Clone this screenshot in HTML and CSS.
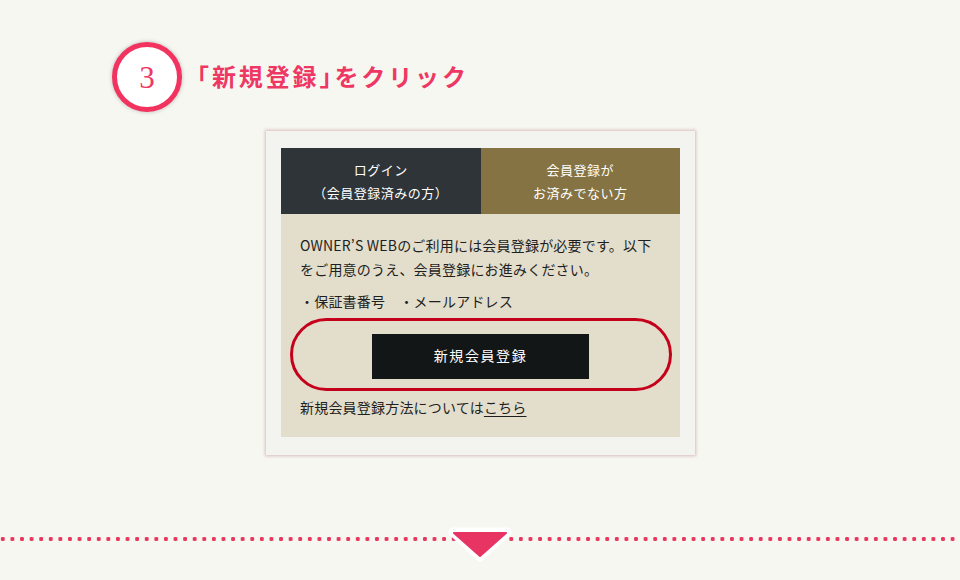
FILE: index.html
```html
<!DOCTYPE html>
<html lang="ja">
<head>
<meta charset="utf-8">
<link rel="stylesheet" href="styles.css">
</head>
<body>
<div class="page">
  <div class="step">
    <div class="num">3</div>
    <h2 class="step-title">「新規登録」をクリック</h2>
  </div>
  <div class="card">
    <div class="tabs">
      <div class="tab tab-login">ログイン<br>（会員登録済みの方）</div>
      <div class="tab tab-new">会員登録が<br>お済みでない方</div>
    </div>
    <div class="panel">
      <p class="lead">OWNER’S WEBのご利用には会員登録が必要です。以下<br>をご用意のうえ、会員登録にお進みください。</p>
      <p class="needs">・保証書番号　・メールアドレス</p>
      <div class="btn-row"><span class="btn">新規会員登録</span></div>
      <p class="howto">新規会員登録方法については<a href="#" class="link">こちら</a></p>
      <div class="oval"></div>
    </div>
  </div>
  <div class="divider">
    <svg class="arrow" width="70" height="40" viewBox="0 0 70 40">
      <polygon points="8,6 62,6 35,31" fill="#fff" stroke="#fff" stroke-width="9" stroke-linejoin="round"/>
      <polygon points="9,7 61,7 35,30" fill="#E83462" stroke="#E83462" stroke-width="2" stroke-linejoin="round"/>
    </svg>
  </div>
</div>
</body>
</html>
```
FILE: styles.css
```css
html, body {
  margin: 0;
  padding: 0;
}
body {
  background: #F7F7F2;
  font-family: "Noto Sans CJK JP", "Noto Sans", sans-serif;
  color: #2b2b2b;
  width: 960px;
  height: 580px;
  overflow: hidden;
}
.page {
  padding-top: 42px;
}
.step {
  display: flex;
  align-items: center;
  padding-left: 112px;
  gap: 14px;
}
.num {
  width: 60px;
  height: 60px;
  border: 5px solid #F2335F;
  border-radius: 50%;
  background: #fff;
  box-shadow: 0 0 4px rgba(0,0,0,0.25);
  display: flex;
  align-items: center;
  justify-content: center;
  font-family: "Liberation Serif", "DejaVu Serif", serif;
  font-size: 31px;
  color: #EE3763;
  line-height: 1;
}
.step-title {
  margin: 0 0 2px 1px;
  font-size: 24px;
  font-weight: 700;
  letter-spacing: 2.9px;
  font-feature-settings: "halt";
  color: #EE3763;
  line-height: 1;
}
.card {
  width: 399px;
  margin: 19px 0 0 266px;
  padding: 17px 15px 18px;
  background: #F3F3EF;
  box-shadow: 0 0 3px 1px rgba(190,150,150,0.6);
}
.tabs {
  display: flex;
}
.tab {
  flex: 1;
  height: 66px;
  display: flex;
  align-items: center;
  justify-content: center;
  text-align: center;
  color: #fff;
  font-size: 13px;
  line-height: 23px;
  letter-spacing: 0.5px;
}
.tab-login {
  background: #2E3438;
}
.tab-new {
  background: #857343;
}
.panel {
  position: relative;
  background: #E3DDCB;
  padding: 19px 19px 18px;
}
.panel p {
  margin: 0;
  font-size: 14px;
  line-height: 24px;
  letter-spacing: 0.2px;
  color: #1f1f1f;
}
.needs {
  margin-top: 8px !important;
}
.btn-row {
  display: flex;
  justify-content: center;
  margin-top: 21px;
}
.btn {
  width: 217px;
  height: 45px;
  padding-bottom: 3px;
  box-sizing: border-box;
  background: #131617;
  color: #fff;
  font-size: 14px;
  letter-spacing: 1.6px;
  display: flex;
  align-items: center;
  justify-content: center;
}
.howto {
  margin-top: 16px !important;
}
.link {
  color: #1f1f1f;
  text-decoration: underline;
  text-underline-offset: 3px;
}
.oval {
  position: absolute;
  left: 9px;
  top: 104px;
  width: 376px;
  height: 67px;
  border: 3px solid #C4001A;
  border-radius: 40px;
  pointer-events: none;
}
.divider {
  position: relative;
  margin-top: 81px;
  height: 6px;
  background-image: radial-gradient(circle, #E8365F 1.9px, transparent 2.4px);
  background-size: 9.6px 6px;
  background-position: -2px 0;
}
.arrow {
  position: absolute;
  left: 445px;
  top: -10px;
}
```
